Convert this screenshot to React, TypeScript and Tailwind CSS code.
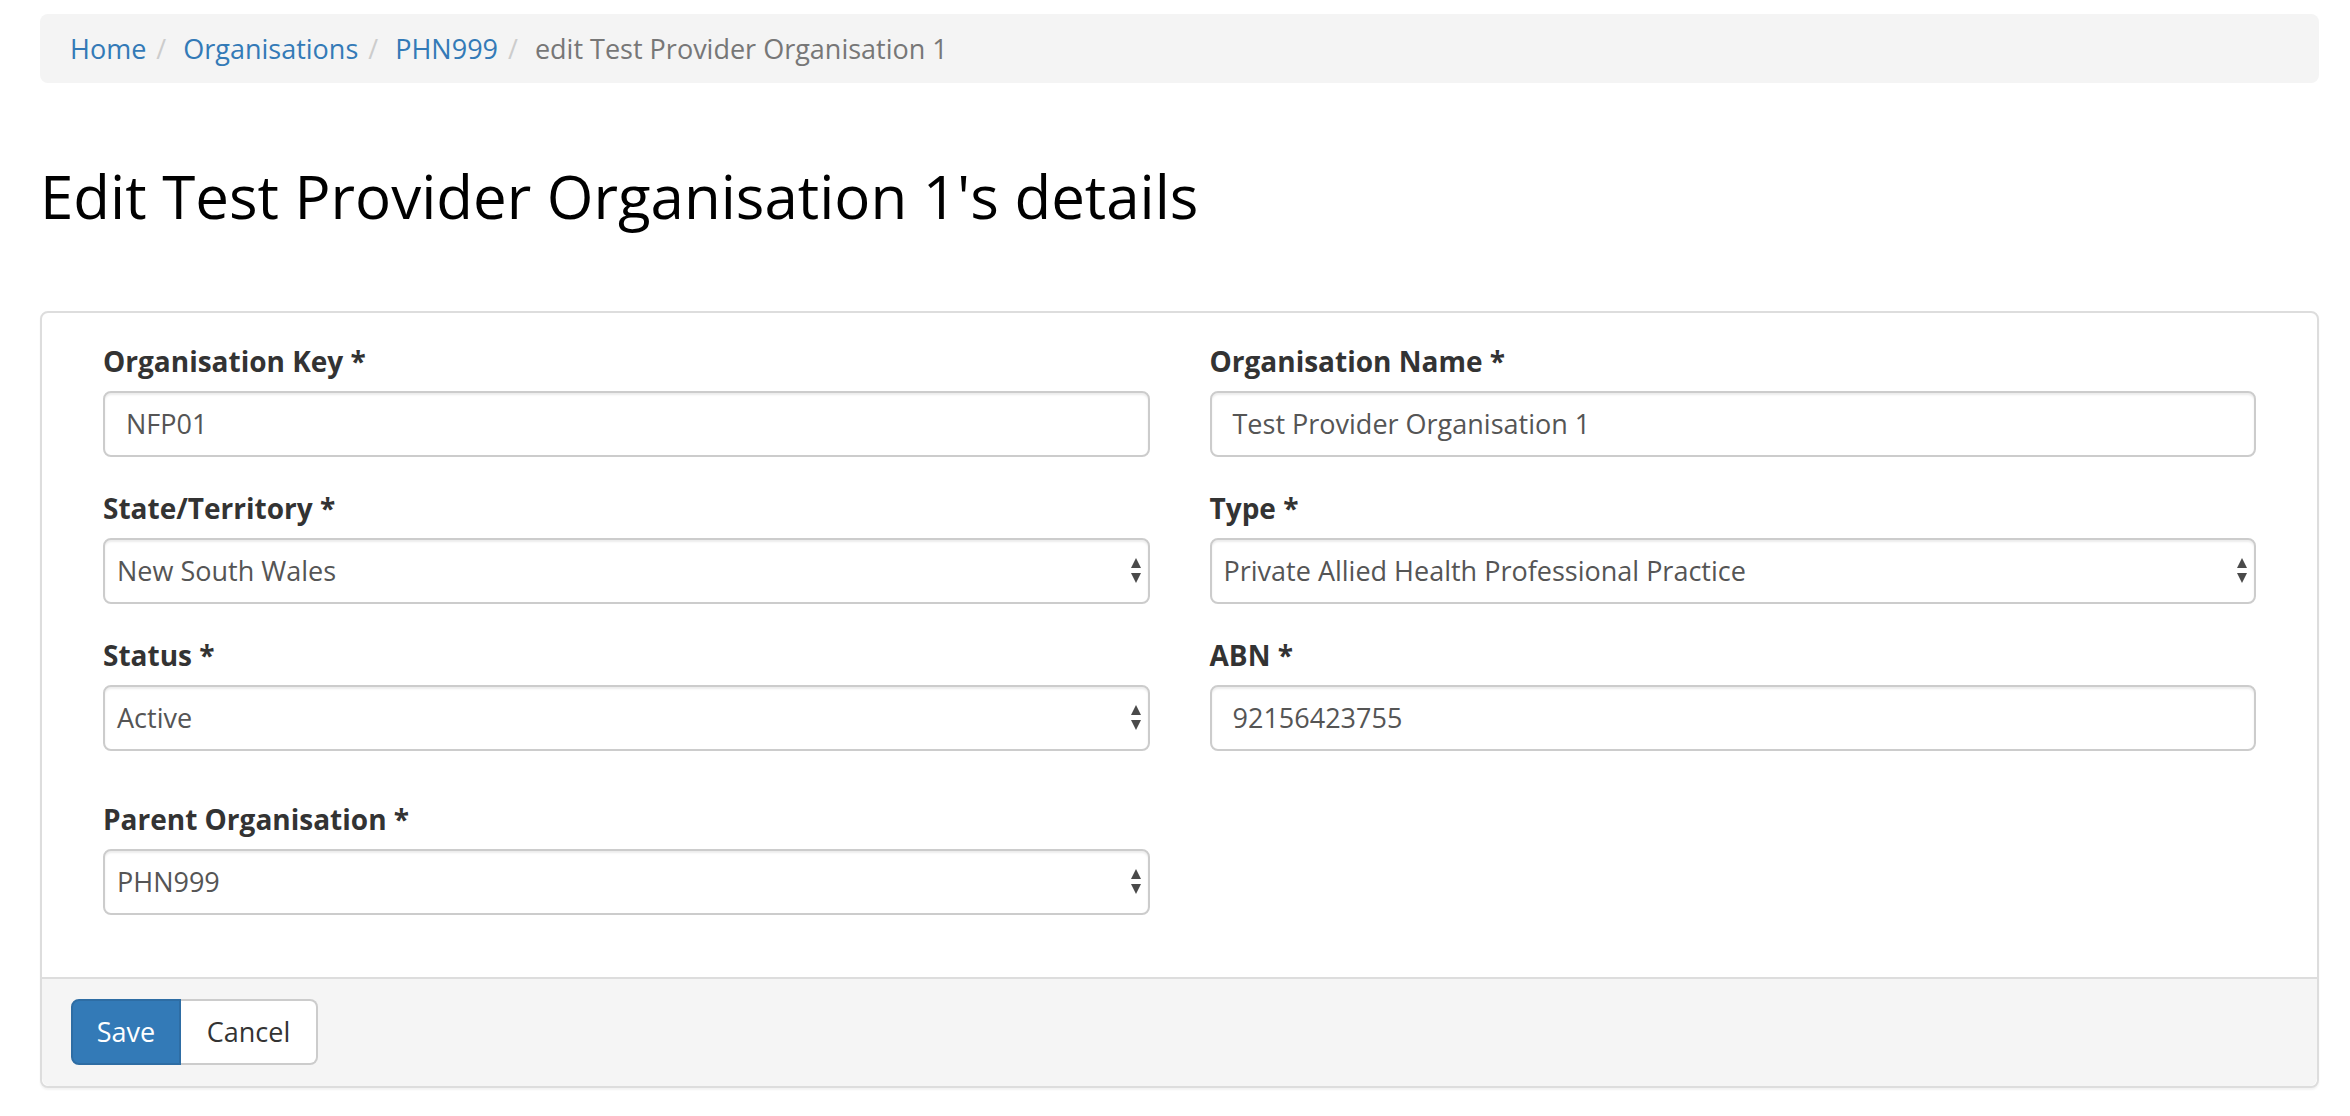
import React from 'react';

type Field = {
  id: number;
  label: string;
  value: string;
  select?: boolean;
};

const fields: Field[] = [
  { id: 1, label: 'Organisation Key *', value: 'NFP01' },
  { id: 2, label: 'Organisation Name *', value: 'Test Provider Organisation 1' },
  { id: 3, label: 'State/Territory *', value: 'New South Wales', select: true },
  { id: 4, label: 'Type *', value: 'Private Allied Health Professional Practice', select: true },
  { id: 5, label: 'Status *', value: 'Active', select: true },
  { id: 6, label: 'ABN *', value: '92156423755' },
];

function Arrows() {
  return (
    <svg width="10" height="26" viewBox="0 0 10 26" className="shrink-0">
      <path d="M5 0 L10 10 L0 10 Z" fill="#4a4a4a" />
      <path d="M0 15 L10 15 L5 25 Z" fill="#4a4a4a" />
    </svg>
  );
}

function FormField({ f }: { f: Field }) {
  return (
    <div className="flex flex-col">
      <label className="mb-[10px] h-[40px] text-[28px] leading-[40px] font-bold text-[#333]">
        {f.label}
      </label>
      {f.select ? (
        <div className="flex h-[66px] items-center justify-between rounded-[8px] border-2 border-[#ccc] bg-white pl-[12px] pr-[7px] text-[27px] text-[#555] shadow-[inset_0_2px_2px_rgba(0,0,0,0.075)]">
          <span>{f.value}</span>
          <Arrows />
        </div>
      ) : (
        <div className="flex h-[66px] items-center rounded-[8px] border-2 border-[#ccc] bg-white pl-[21px] text-[27px] text-[#555] shadow-[inset_0_2px_2px_rgba(0,0,0,0.075)]">
          {f.value}
        </div>
      )}
    </div>
  );
}

export default function App() {
  const crumbs = ['Home', 'Organisations', 'PHN999'];

  return (
    <div className="min-h-[1116px] bg-white pt-[14px] pl-[40px] font-['Open_Sans',sans-serif] text-[#333]">
      <div className="w-[2279px]">
        <ol className="flex h-[69px] items-center rounded-[8px] bg-[#f4f4f4] px-[30px] pt-[2px] text-[27px]">
          {crumbs.map((c) => (
            <li key={c} className="flex items-center">
              <span className="text-[#337ab7]">{c}</span>
              <span className="px-[10px] text-[#ccc]">/&nbsp;</span>
            </li>
          ))}
          <li className="text-[#777]">edit Test Provider Organisation 1</li>
        </ol>

        <h2 className="mt-[80px] text-[60px] leading-[66px] font-normal text-black">
          Edit Test Provider Organisation 1's details
        </h2>

        <div className="mt-[82px] rounded-[8px] border-2 border-[#ddd] bg-white shadow-[0_2px_2px_rgba(0,0,0,0.05)]">
          <div className="px-[61px] pt-[28px] pb-[62px]">
            <div className="grid grid-cols-2 gap-x-[60px] gap-y-[31px]">
              {fields.map((f) => (
                <FormField key={f.id} f={f} />
              ))}
            </div>
            <div className="mt-[48px] grid grid-cols-2 gap-x-[60px]">
              <FormField f={{ id: 7, label: 'Parent Organisation *', value: 'PHN999', select: true }} />
            </div>
          </div>
          <div className="rounded-b-[8px] border-t-2 border-[#ddd] bg-[#f5f5f5] px-[29px] pt-[20px] pb-[21px]">
            <div className="flex h-[66px]">
              <button className="w-[110px] rounded-l-[8px] border-2 border-[#2e6da4] bg-[#337ab7] text-[27px] text-white">
                Save
              </button>
              <button className="w-[137px] rounded-r-[8px] border-2 border-l-0 border-[#ccc] bg-white text-[27px] text-[#333]">
                Cancel
              </button>
            </div>
          </div>
        </div>
      </div>
    </div>
  );
}
